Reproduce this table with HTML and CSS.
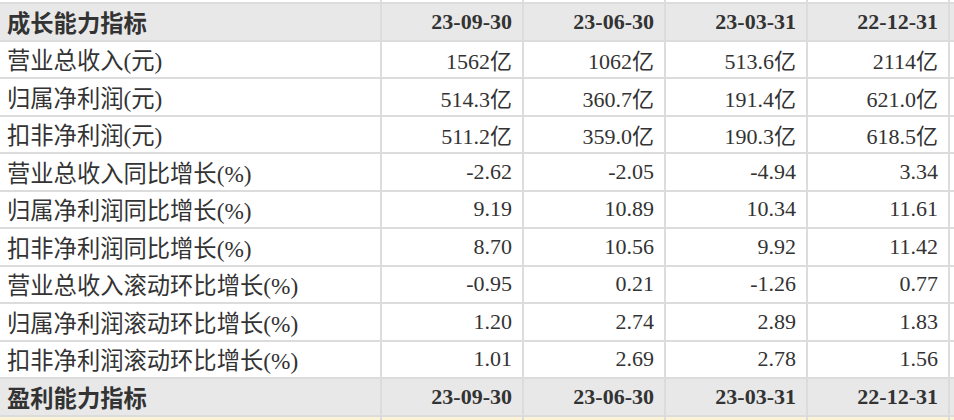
FILE: index.html
```html
<!DOCTYPE html>
<html lang="zh-CN">
<head>
<meta charset="utf-8">
<link rel="stylesheet" href="styles.css">
</head>
<body>
<div class="frame">
<div class="sheet">
  <div class="row stub"><div class="cell label"></div><div class="cell"></div><div class="cell"></div><div class="cell"></div><div class="cell"></div><div class="cell"></div></div>
  <div class="row head"><div class="cell label">成长能力指标</div><div class="cell">23-09-30</div><div class="cell">23-06-30</div><div class="cell">23-03-31</div><div class="cell">22-12-31</div><div class="cell"></div></div>
  <div class="row"><div class="cell label">营业总收入(元)</div><div class="cell">1562亿</div><div class="cell">1062亿</div><div class="cell">513.6亿</div><div class="cell">2114亿</div><div class="cell"></div></div>
  <div class="row"><div class="cell label">归属净利润(元)</div><div class="cell">514.3亿</div><div class="cell">360.7亿</div><div class="cell">191.4亿</div><div class="cell">621.0亿</div><div class="cell"></div></div>
  <div class="row"><div class="cell label">扣非净利润(元)</div><div class="cell">511.2亿</div><div class="cell">359.0亿</div><div class="cell">190.3亿</div><div class="cell">618.5亿</div><div class="cell"></div></div>
  <div class="row"><div class="cell label">营业总收入同比增长(%)</div><div class="cell">-2.62</div><div class="cell">-2.05</div><div class="cell">-4.94</div><div class="cell">3.34</div><div class="cell"></div></div>
  <div class="row"><div class="cell label">归属净利润同比增长(%)</div><div class="cell">9.19</div><div class="cell">10.89</div><div class="cell">10.34</div><div class="cell">11.61</div><div class="cell"></div></div>
  <div class="row"><div class="cell label">扣非净利润同比增长(%)</div><div class="cell">8.70</div><div class="cell">10.56</div><div class="cell">9.92</div><div class="cell">11.42</div><div class="cell"></div></div>
  <div class="row"><div class="cell label">营业总收入滚动环比增长(%)</div><div class="cell">-0.95</div><div class="cell">0.21</div><div class="cell">-1.26</div><div class="cell">0.77</div><div class="cell"></div></div>
  <div class="row"><div class="cell label">归属净利润滚动环比增长(%)</div><div class="cell">1.20</div><div class="cell">2.74</div><div class="cell">2.89</div><div class="cell">1.83</div><div class="cell"></div></div>
  <div class="row"><div class="cell label">扣非净利润滚动环比增长(%)</div><div class="cell">1.01</div><div class="cell">2.69</div><div class="cell">2.78</div><div class="cell">1.56</div><div class="cell"></div></div>
  <div class="row head"><div class="cell label">盈利能力指标</div><div class="cell">23-09-30</div><div class="cell">23-06-30</div><div class="cell">23-03-31</div><div class="cell">22-12-31</div><div class="cell"></div></div>
  <div class="row note"><div class="cell label"></div><div class="cell"></div><div class="cell"></div><div class="cell"></div><div class="cell"></div><div class="cell"></div></div>
</div>
</div>
</body>
</html>
```
FILE: styles.css
```css
html, body {
  margin: 0;
  padding: 0;
  background: #fff;
}
body {
  font-family: "Liberation Serif", "Noto Sans CJK SC", serif;
  color: #333;
}
.frame {
  width: 954px;
  height: 420px;
  overflow: hidden;
}
.sheet {
  width: 1092px;
  display: flex;
  flex-direction: column;
}
.row {
  display: flex;
  height: 37.5px;
  box-sizing: border-box;
  border-top: 2px solid #dcdcdc;
}
.row.stub {
  height: 2px;
  border-top: none;
}
.row.head {
  background: #e8e8e8;
  font-weight: bold;
}
.row.note {
  background: #fdf4d8;
  height: 30px;
}
.cell {
  width: 142px;
  flex: none;
  box-sizing: border-box;
  border-right: 2px solid #dcdcdc;
  padding: 0 10px 0 8px;
  display: flex;
  align-items: center;
  justify-content: flex-end;
  font-size: 22px;
  white-space: nowrap;
}
.cell.label {
  width: 382px;
  justify-content: flex-start;
  padding-left: 7px;
  font-size: 23.3px;
}
```
